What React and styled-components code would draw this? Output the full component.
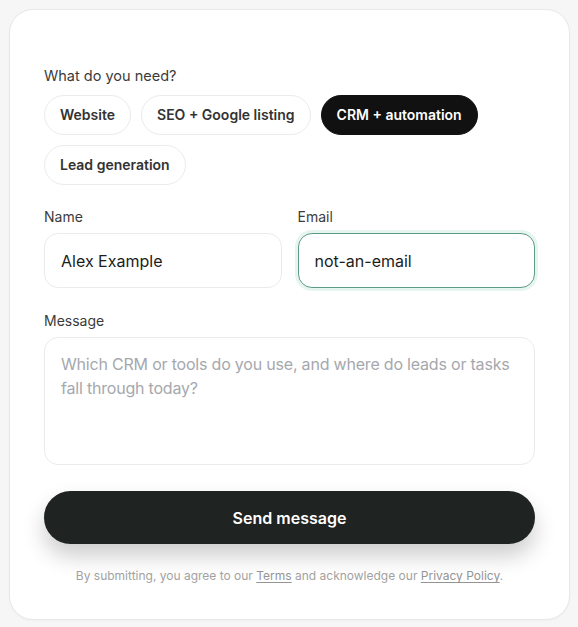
import React from 'react'
import styled, { createGlobalStyle } from 'styled-components'

const Global = createGlobalStyle`
  * { box-sizing: border-box; }
  body {
    margin: 0;
    background: #f6f6f6;
    font-family: Inter, "Noto Sans", sans-serif;
    color: #1c1c1c;
  }
`

const Page = styled.div`
  padding: 9px 8px 9px 9px;
`

const Card = styled.form`
  background: #ffffff;
  border: 1px solid #e8e8e8;
  border-radius: 24px;
  padding: 56px 34px 35px;
  box-shadow: 0 1px 2px rgba(0, 0, 0, 0.03);
`

const Label = styled.div`
  font-size: ${p => p.$size || 14}px;
  line-height: 20px;
  color: #3b3b3b;
  margin-bottom: ${p => p.$gap || 7}px;
`

const Chips = styled.div`
  display: flex;
  flex-wrap: wrap;
  gap: 10px;
`

const Chip = styled.button`
  font-family: inherit;
  font-size: 14px;
  font-weight: 600;
  line-height: 20px;
  padding: 9px 15px;
  border-radius: 999px;
  border: 1px solid ${p => (p.$active ? '#111111' : '#ebebeb')};
  background: ${p => (p.$active ? '#111111' : '#ffffff')};
  color: ${p => (p.$active ? '#ffffff' : '#333333')};
  cursor: pointer;
`

const Row = styled.div`
  display: grid;
  grid-template-columns: minmax(0, 1fr) minmax(0, 1fr);
  gap: 16px;
  margin-top: 22px;
`

const Field = styled.div`
  display: flex;
  flex-direction: column;
  min-width: 0;
  margin-top: ${p => p.$top || 0}px;
`

const Input = styled.input`
  width: 100%;
  min-width: 0;
  font-family: inherit;
  font-size: 16px;
  height: 55px;
  padding: 0 16px;
  border-radius: 14px;
  border: 1px solid ${p => (p.$focus ? '#5c9c84' : '#ebebeb')};
  box-shadow: ${p => (p.$focus ? '0 0 0 3px rgba(52, 170, 120, 0.12)' : 'none')};
  color: #1c1c1c;
  background: #fff;
  outline: none;
`

const TextArea = styled.textarea`
  width: 100%;
  font-family: inherit;
  font-size: 16px;
  line-height: 24px;
  letter-spacing: -0.2px;
  height: 128px;
  padding: 14px 14px 14px 16px;
  border-radius: 14px;
  border: 1px solid #ebebeb;
  resize: none;
  outline: none;
  color: #1c1c1c;
  &::placeholder {
    color: #a5a8ad;
  }
`

const Submit = styled.button`
  margin-top: 26px;
  width: 100%;
  height: 53px;
  border: none;
  border-radius: 999px;
  background: #1f2321;
  color: #fff;
  font-family: inherit;
  font-size: 16px;
  font-weight: 600;
  box-shadow: 0 12px 22px rgba(0, 0, 0, 0.2);
  cursor: pointer;
`

const Note = styled.p`
  margin: 24px 0 0;
  text-align: center;
  font-size: 12px;
  line-height: 16px;
  color: #a2a2a2;

  a {
    color: #949494;
    text-decoration: underline;
    text-underline-offset: 2px;
  }
`

const services = ['Website', 'SEO + Google listing', 'CRM + automation', 'Lead generation']

const App = () => {
  return (
    <Page>
      <Global />
      <Card onSubmit={e => e.preventDefault()}>
        <Label $gap={9} $size={14.5}>What do you need?</Label>
        <Chips>
          {services.map(s => (
            <Chip type="button" key={s} $active={s === 'CRM + automation'}>
              {s}
            </Chip>
          ))}
        </Chips>

        <Row>
          <Field>
            <Label $gap={6}>Name</Label>
            <Input defaultValue="Alex Example" />
          </Field>
          <Field>
            <Label $gap={6}>Email</Label>
            <Input $focus defaultValue="not-an-email" />
          </Field>
        </Row>

        <Field $top={23}>
          <Label $gap={6}>Message</Label>
          <TextArea placeholder="Which CRM or tools do you use, and where do leads or tasks fall through today?" />
        </Field>

        <Submit type="submit">Send message</Submit>

        <Note>
          By submitting, you agree to our <a href="#terms">Terms</a> and acknowledge our{' '}
          <a href="#privacy">Privacy Policy</a>.
        </Note>
      </Card>
    </Page>
  )
}

export default App
